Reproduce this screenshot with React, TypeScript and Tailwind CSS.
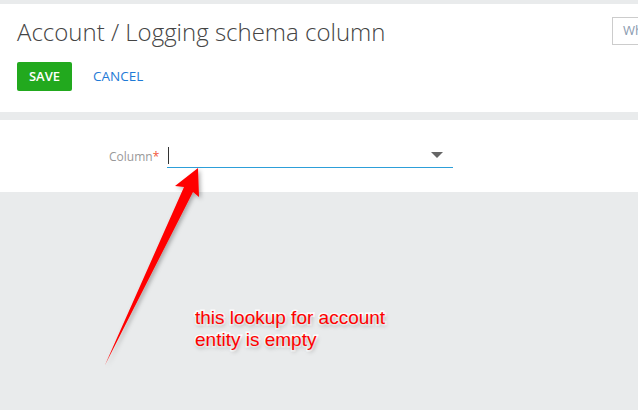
export default function App() {
  return (
    <div className="relative h-[410px] w-[638px] overflow-hidden bg-[#e9ebec] pt-[4px] font-['Open_Sans',sans-serif]">
      {/* header */}
      <div className="flex h-[108px] justify-between bg-white pl-[17px]">
        <div className="flex flex-col">
          <h1 className="mt-[10px] text-[24px] font-light leading-[36px] text-[#444]">
            Account / Logging schema column
          </h1>
          <div className="mt-[12px] flex items-center gap-[21px]">
            <button className="h-[29px] w-[55px] rounded-[2px] bg-[#22a91e] text-[13px] font-semibold text-white">
              SAVE
            </button>
            <button className="text-[13.5px] text-[#1f7ad6]">CANCEL</button>
          </div>
        </div>
        <div className="mt-[13px] h-[28px] w-[26px] shrink-0 overflow-hidden whitespace-nowrap border border-r-0 border-[#ccc] pl-[10px] pt-[3px] text-[13px] text-[#8a9bb0]">
          Wh
        </div>
      </div>

      {/* form */}
      <div className="mt-[8px] flex h-[72px] items-start bg-white pl-[109px] pt-[24px]">
        <label className="mt-[4px] text-[12px] text-[#999]">
          Column<span className="text-[#f2553a]">*</span>
        </label>
        <div className="relative ml-[8px] flex h-[24px] w-[286px] items-center border-b border-[#2d9fd9]">
          <span className="ml-[1px] h-[17px] w-[1px] bg-[#333]" />
          <svg className="absolute right-[10px] top-[8px]" width="12" height="6" viewBox="0 0 12 6">
            <path d="M0 0h12L6 6z" fill="#666" />
          </svg>
        </div>
      </div>

      {/* annotation arrow */}
      <svg className="absolute left-0 top-0" width="638" height="410" viewBox="0 0 638 410">
        <defs>
          <filter id="sh" x="-20%" y="-20%" width="140%" height="140%">
            <feDropShadow dx="2" dy="2" stdDeviation="2" floodColor="#000" floodOpacity="0.3" />
          </filter>
        </defs>
        <polygon
          points="198,168 199,197 193,192 105,365 184,187 175,186"
          fill="#ff0000"
          filter="url(#sh)"
        />
      </svg>

      <div className="absolute left-[195px] top-[307px] font-['Liberation_Sans',Arial,sans-serif] text-[19px] leading-[22px] text-[#ff0000] [paint-order:stroke_fill] [-webkit-text-stroke:3px_#fff] [text-shadow:1px_2px_4px_rgba(0,0,0,0.35)]">
        this lookup for account
        <br />
        entity is empty
      </div>
    </div>
  );
}
